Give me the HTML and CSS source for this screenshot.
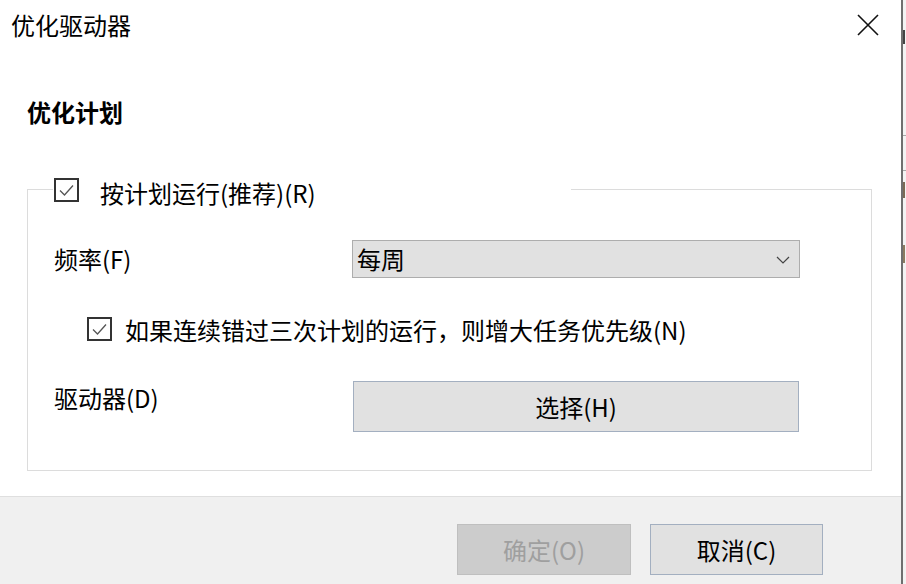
FILE: index.html
```html
<!DOCTYPE html>
<html lang="zh-CN">
<head>
<meta charset="utf-8">
<title>优化驱动器</title>
<link rel="stylesheet" href="styles.css">
</head>
<body>
<div class="screen">
  <div class="dialog">
    <div class="titlebar">
      <span class="title">优化驱动器</span>
      <svg class="close" width="22" height="22" viewBox="0 0 22 22"><path d="M1 1 L21 21 M21 1 L1 21" stroke="#111" stroke-width="1.6" fill="none"/></svg>
    </div>
    <div class="content">
      <div class="heading">优化计划</div>
      <div class="group">
        <div class="legend">
          <span class="checkbox"><svg width="21" height="20" viewBox="0 0 21 20"><path d="M4 10.5 L8.5 15 L17 5.5" stroke="#555" stroke-width="1.3" fill="none"/></svg></span>
          <span class="legend-text">按计划运行(推荐)(R)</span>
        </div>
        <div class="row freq-row">
          <span class="label">频率(F)</span>
          <div class="select">
            <span>每周</span>
            <svg class="chev" width="14" height="8" viewBox="0 0 14 8"><path d="M1 1 L7 7 L13 1" stroke="#444" stroke-width="1.2" fill="none"/></svg>
          </div>
        </div>
        <div class="check-row">
          <span class="checkbox"><svg width="21" height="20" viewBox="0 0 21 20"><path d="M4 10.5 L8.5 15 L17 5.5" stroke="#555" stroke-width="1.3" fill="none"/></svg></span>
          <span class="check-text">如果连续错过三次计划的运行，则增大任务优先级(N)</span>
        </div>
        <div class="row drive-row">
          <span class="label">驱动器(D)</span>
          <div class="btn choose">选择(H)</div>
        </div>
      </div>
    </div>
    <div class="footer">
      <div class="btn ok">确定(O)</div>
      <div class="btn cancel">取消(C)</div>
    </div>
  </div>
  <div class="behind">
    <span class="frag f1"></span>
    <span class="hline l1"></span>
    <span class="frag f2"></span>
    <span class="hline l2"></span>
    <span class="frag f3"></span>
  </div>
</div>
</body>
</html>
```

FILE: styles.css
```css
* { box-sizing: border-box; }
html, body { margin: 0; padding: 0; }
body {
  font-family: "Noto Sans CJK SC", "Microsoft YaHei", sans-serif;
  font-size: 24px;
  color: #000;
  background: #fff;
}
.screen {
  display: flex;
  width: 906px;
  height: 584px;
  overflow: hidden;
}
.dialog {
  width: 901px;
  height: 584px;
  display: flex;
  flex-direction: column;
  background: #fff;
}
.titlebar {
  height: 52px;
  display: flex;
  align-items: center;
  justify-content: space-between;
  padding: 0 22px 2px 11px;
}
.title {
  font-size: 24px;
  line-height: 32px;
}
.close { display: block; margin-top: 0; }
.content {
  flex: 1;
  padding: 0 29px 0 27px;
}
.heading {
  margin-top: 44px;
  font-weight: bold;
  line-height: 32px;
  font-size: 24px;
}
.group {
  position: relative;
  margin-top: 61px;
  height: 282px;
  border: 1px solid #dcdcdc;
  padding: 50px 0 0 26px;
}
.legend {
  position: absolute;
  top: -14px;
  left: 25px;
  width: 518px;
  height: 28px;
  background: #fff;
  display: flex;
  align-items: center;
}
.checkbox {
  width: 25px;
  height: 24px;
  border: 2px solid #333;
  background: #fff;
  display: inline-flex;
  align-items: center;
  justify-content: center;
  flex: none;
}
.checkbox svg { display: block; }
.legend .checkbox { margin-left: 1px; }
.legend-text {
  margin-left: 21px;
  line-height: 32px;
  margin-top: 5px;
}
.row {
  display: grid;
  grid-template-columns: 298px 448px;
}
.freq-row { align-items: center; }
.label { line-height: 32px; }
.select {
  height: 38px;
  background: #e1e1e1;
  border: 1px solid #adadad;
  display: flex;
  align-items: center;
  justify-content: space-between;
  padding: 0 9px 0 4px;
  line-height: 32px;
}
.chev { display: block; margin-top: 1px; }
.check-row {
  display: flex;
  align-items: center;
  margin-top: 39px;
  padding-left: 33px;
  height: 24px;
}
.check-text {
  margin-left: 13px;
  line-height: 32px;
  margin-top: 2px;
}
.drive-row {
  margin-top: 40px;
  align-items: start;
}
.drive-row .label { margin-top: 1px; }
.btn {
  display: flex;
  align-items: center;
  justify-content: center;
  line-height: 32px;
}
.choose {
  margin-left: 1px;
  width: 446px;
  height: 51px;
  background: #e1e1e1;
  border: 1px solid #a3afc0;
}
.footer {
  height: 88px;
  background: #f0f0f0;
  border-top: 1px solid #dfdfdf;
  display: flex;
  justify-content: flex-end;
  gap: 19px;
  padding: 27px 78px 0 0;
}
.footer .btn {
  width: 173px;
  height: 51px;
}
.ok {
  width: 174px !important;
  background: #cccccc;
  border: 1px solid #bfbfbf;
  color: #9f9f9f;
}
.cancel {
  background: #e1e1e1;
  border: 1px solid #a3afc0;
}
.behind {
  position: relative;
  width: 5px;
  height: 584px;
  border-left: 2px solid #6f6f6f;
  background: #f3f3f3;
}
.hline {
  position: absolute;
  left: 0;
  right: 0;
  height: 1px;
  background: #a8a8a8;
}
.l1 { top: 135px; }
.l2 { top: 170px; }
.frag {
  position: absolute;
  left: 0;
  width: 2px;
  background: #444;
}
.f1 { top: 30px; height: 14px; }
.f2 { top: 182px; height: 16px; background: #7a6a55; }
.f3 { top: 245px; height: 18px; background: #8a7a60; }
```
